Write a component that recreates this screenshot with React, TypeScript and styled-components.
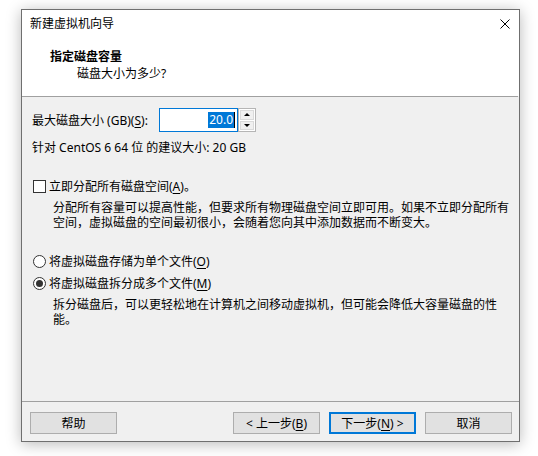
import React from "react";
import styled, { createGlobalStyle } from "styled-components";

/* global */
const GlobalStyle = createGlobalStyle`
  html, body {
    margin: 0;
    padding: 0;
    background: #ffffff;
  }
  body {
    font-family: "Noto Sans", "Noto Sans CJK SC", sans-serif;
    font-size: 12px;
    color: #000;
  }
`;

/* styled */
const Page = styled.div`
  width: 538px;
  height: 456px;
  padding: 9px 0 0 21px;
  box-sizing: border-box;
`;

const Window = styled.div`
  width: 499px;
  height: 433px;
  box-sizing: border-box;
  border: 1px solid #6f6f6f;
  display: flex;
  flex-direction: column;
  background: #f0f0f0;
  box-shadow: 0 2px 14px rgba(0, 0, 0, 0.28);
`;

const Header = styled.div`
  height: 86px;
  background: #ffffff;
  display: flex;
  flex-direction: column;
`;

const TitleBar = styled.div`
  height: 28px;
  display: flex;
  align-items: center;
  justify-content: space-between;
  padding: 0 9px 0 8px;
`;

const Title = styled.span`
  line-height: 14px;
`;

const CloseButton = styled.span`
  display: flex;
  width: 10px;
  height: 10px;
`;

const Heading = styled.div`
  margin-top: 11px;
  padding-left: 28px;
  font-weight: bold;
  line-height: 15px;
`;

const SubHeading = styled.div`
  margin-top: 2px;
  padding-left: 55px;
  line-height: 15px;
`;

const Divider = styled.div<{ $inset?: number }>`
  height: 1px;
  background: #a0a0a0;
  margin-right: ${(p) => p.$inset ?? 0}px;
`;

const Body = styled.div`
  flex: 1;
  padding: 11px 10px 0 10px;
  display: flex;
  flex-direction: column;
`;

const SizeRow = styled.div`
  display: flex;
  align-items: center;
  height: 24px;
`;

const SizeLabel = styled.label`
  width: 127px;
  line-height: 15px;
`;

const Spin = styled.div`
  display: flex;
  height: 24px;
`;

const SpinInput = styled.div`
  width: 79px;
  box-sizing: border-box;
  border: 1px solid #0078d7;
  background: #fff;
  display: flex;
  align-items: center;
  justify-content: flex-end;
  padding-right: 2px;
`;

const Selected = styled.span`
  background: #0078d7;
  color: #fff;
  line-height: 16px;
  padding: 0 1px;
  border-right: 1px solid #000;
`;

const SpinButtons = styled.div`
  width: 18px;
  box-sizing: border-box;
  border: 1px solid #b5b5b5;
  display: flex;
  flex-direction: column;
  gap: 1px;
  padding: 1px;
  background: #fff;
`;

const SpinButton = styled.div`
  flex: 1;
  background: #f0f0f0;
  border: 1px solid #dadada;
  display: flex;
  align-items: center;
  justify-content: center;
`;

const Arrow = styled.span<{ $down?: boolean }>`
  width: 0;
  height: 0;
  border-left: 3px solid transparent;
  border-right: 3px solid transparent;
  ${(p) =>
    p.$down ? "border-top: 3px solid #000;" : "border-bottom: 3px solid #000;"}
`;

const Hint = styled.div`
  margin-top: 8px;
  line-height: 15px;
`;

const OptionRow = styled.div<{ $top: number }>`
  display: flex;
  align-items: center;
  gap: 3px;
  margin-top: ${(p) => p.$top}px;
  line-height: 15px;
`;

const CheckBox = styled.span`
  width: 13px;
  height: 13px;
  box-sizing: border-box;
  border: 1px solid #333;
  background: #fff;
  margin-left: 1px;
`;

const Radio = styled.span<{ $checked?: boolean }>`
  width: 13px;
  height: 13px;
  box-sizing: border-box;
  border: 1px solid #333;
  border-radius: 50%;
  background: #fff;
  margin-left: 1px;
  display: flex;
  align-items: center;
  justify-content: center;
  &::after {
    content: "";
    width: 7px;
    height: 7px;
    border-radius: 50%;
    background: ${(p) => (p.$checked ? "#333" : "transparent")};
  }
`;

const Desc = styled.p`
  margin: 6px 0 0 21px;
  line-height: 15px;
`;

const Key = styled.u`
  text-underline-offset: 2px;
`;

const Footer = styled.div`
  flex: 0 0 39px;
  display: flex;
  align-items: flex-start;
  padding: 10px 7px 0 8px;
  box-sizing: border-box;
`;

const Button = styled.button<{ $default?: boolean }>`
  width: 87px;
  height: 22px;
  box-sizing: border-box;
  background: #e1e1e1;
  border: ${(p) => (p.$default ? "2px solid #0078d7" : "1px solid #adadad")};
  font: inherit;
  color: #000;
  padding: 0;
  line-height: 15px;
`;

const Spacer = styled.div`
  flex: 1;
`;

const ButtonGroup = styled.div`
  display: flex;
  gap: 9px;
`;

/* DOM */
const App: React.FC = (): JSX.Element => {
  return (
    <Page>
      <GlobalStyle />
      <Window>
        <Header>
          <TitleBar>
            <Title>新建虚拟机向导</Title>
            <CloseButton>
              <svg width="10" height="10" viewBox="0 0 10 10">
                <path d="M0.5 0.5 L9.5 9.5 M9.5 0.5 L0.5 9.5" stroke="#000" strokeWidth="1" fill="none" />
              </svg>
            </CloseButton>
          </TitleBar>
          <Heading>指定磁盘容量</Heading>
          <SubHeading>磁盘大小为多少?</SubHeading>
        </Header>
        <Divider $inset={1} />
        <Body>
          <SizeRow>
            <SizeLabel>
              最大磁盘大小 (GB)(<Key>S</Key>):
            </SizeLabel>
            <Spin>
              <SpinInput>
                <Selected>20.0</Selected>
              </SpinInput>
              <SpinButtons>
                <SpinButton>
                  <Arrow />
                </SpinButton>
                <SpinButton>
                  <Arrow $down />
                </SpinButton>
              </SpinButtons>
            </Spin>
          </SizeRow>
          <Hint>针对 CentOS 6 64 位 的建议大小: 20 GB</Hint>
          <OptionRow $top={24}>
            <CheckBox />
            <span>
              立即分配所有磁盘空间(<Key>A</Key>)。
            </span>
          </OptionRow>
          <Desc>
            分配所有容量可以提高性能，但要求所有物理磁盘空间立即可用。如果不立即分配所有
            <br />
            空间，虚拟磁盘的空间最初很小，会随着您向其中添加数据而不断变大。
          </Desc>
          <OptionRow $top={24}>
            <Radio />
            <span>
              将虚拟磁盘存储为单个文件(<Key>O</Key>)
            </span>
          </OptionRow>
          <OptionRow $top={7}>
            <Radio $checked />
            <span>
              将虚拟磁盘拆分成多个文件(<Key>M</Key>)
            </span>
          </OptionRow>
          <Desc>
            拆分磁盘后，可以更轻松地在计算机之间移动虚拟机，但可能会降低大容量磁盘的性
            <br />
            能。
          </Desc>
        </Body>
        <Divider />
        <Footer>
          <Button>帮助</Button>
          <Spacer />
          <ButtonGroup>
            <Button>
              &lt; 上一步(<Key>B</Key>)
            </Button>
            <Button $default>
              下一步(<Key>N</Key>) &gt;
            </Button>
            <Button>取消</Button>
          </ButtonGroup>
        </Footer>
      </Window>
    </Page>
  );
};

export default App;
